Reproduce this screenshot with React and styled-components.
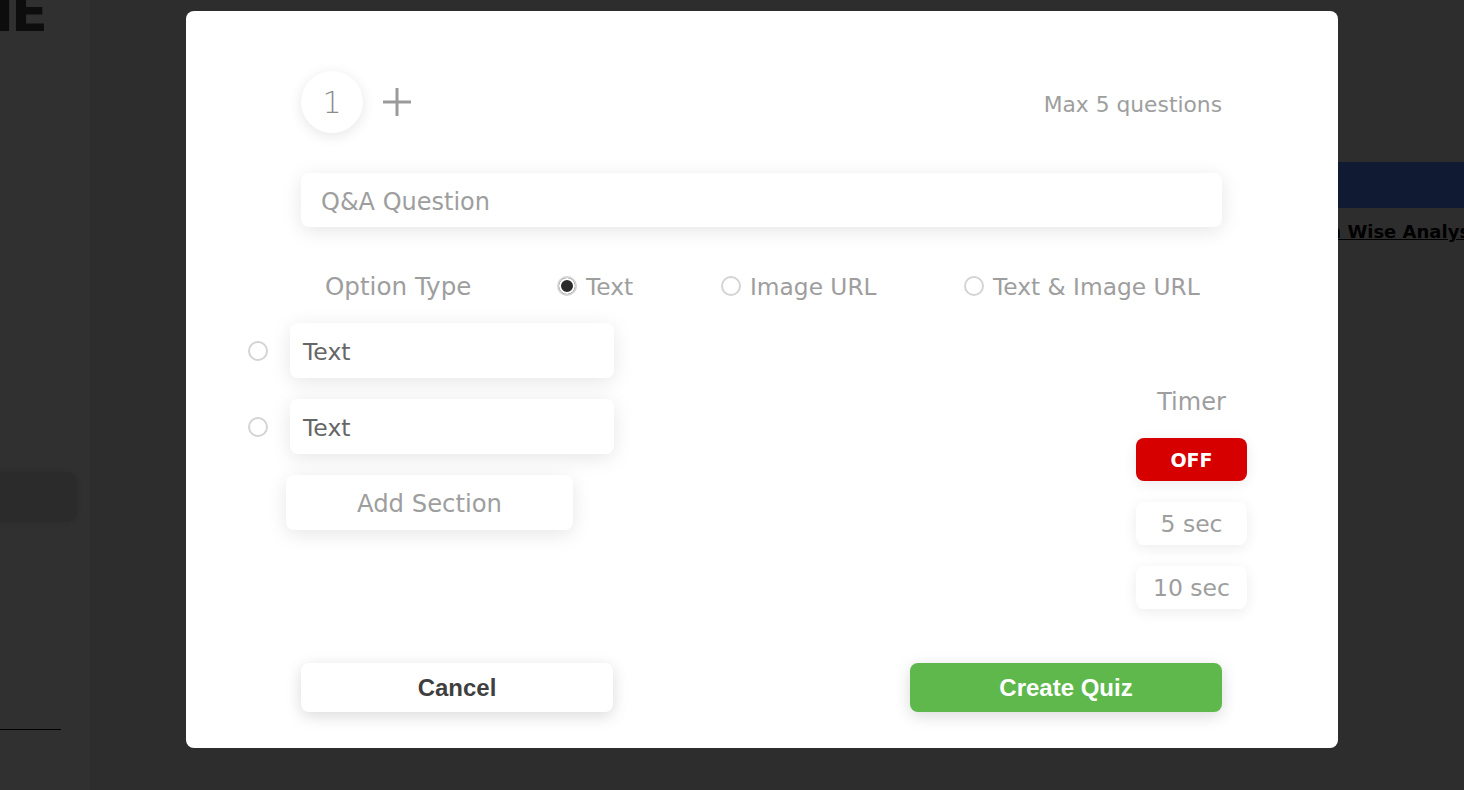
import styled, { createGlobalStyle } from "styled-components";

const GlobalStyle = createGlobalStyle`
  * { box-sizing: border-box; }
  html, body { margin: 0; padding: 0; }
  body {
    width: 1464px;
    height: 790px;
    overflow: hidden;
    font-family: "DejaVu Sans", "Open Sans", sans-serif;
  }
`;

const FONT = `"DejaVu Sans", "Open Sans", sans-serif`;
const GRAY = "#9e9e9e";

function RadioDot({ checked }) {
  return <S.Radio $checked={checked} />;
}

function Plus() {
  return (
    <svg width="30" height="30" viewBox="0 0 30 30">
      <line x1="15" y1="1" x2="15" y2="29" stroke="#9a9a9a" strokeWidth="3" />
      <line x1="1" y1="15" x2="29" y2="15" stroke="#9a9a9a" strokeWidth="3" />
    </svg>
  );
}

function App() {
  const optionTypes = [
    { label: "Text", checked: true },
    { label: "Image URL", checked: false },
    { label: "Text & Image URL", checked: false },
  ];
  const timers = ["5 sec", "10 sec"];

  return (
    <>
      <GlobalStyle />
      <S.Page>
        <S.Sidebar>
          <S.Logo>IE</S.Logo>
          <S.SideBox />
          <S.SideLine />
        </S.Sidebar>
        <S.Main>
          <S.Banner />
          <S.TabRow>
            <S.TabLink>Question Wise Analysis</S.TabLink>
          </S.TabRow>
        </S.Main>
      </S.Page>

      <S.Overlay>
        <S.Modal>
          <S.Header>
            <S.Left>
              <S.NumberBubble>1</S.NumberBubble>
              <S.PlusButton>
                <Plus />
              </S.PlusButton>
            </S.Left>
            <S.MaxNote>Max 5 questions</S.MaxNote>
          </S.Header>

          <S.QuestionInput>Q&amp;A Question</S.QuestionInput>

          <S.TypeRow>
            <S.TypeLabel>Option Type</S.TypeLabel>
            {optionTypes.map((t) => (
              <S.TypeOption key={t.label}>
                <RadioDot checked={t.checked} />
                {t.label}
              </S.TypeOption>
            ))}
          </S.TypeRow>

          <S.Body>
            <S.Options>
              {[0, 1].map((i) => (
                <S.OptionRow key={i}>
                  <RadioDot />
                  <S.OptionInput>Text</S.OptionInput>
                </S.OptionRow>
              ))}
              <S.AddSection>Add Section</S.AddSection>
            </S.Options>

            <S.Timer>
              <S.TimerLabel>Timer</S.TimerLabel>
              <S.TimerButton $active>OFF</S.TimerButton>
              {timers.map((t) => (
                <S.TimerButton key={t}>{t}</S.TimerButton>
              ))}
            </S.Timer>
          </S.Body>

          <S.Footer>
            <S.ActionButton>Cancel</S.ActionButton>
            <S.ActionButton $primary>Create Quiz</S.ActionButton>
          </S.Footer>
        </S.Modal>
      </S.Overlay>
    </>
  );
}
export default App;

const Page = styled.div`
  display: flex;
  width: 1464px;
  height: 790px;
  overflow: hidden;
  background: #dedede;
`;

const Sidebar = styled.div`
  width: 90px;
  flex-shrink: 0;
  background: #f0f0f0;
  display: flex;
  flex-direction: column;
  overflow: hidden;
`;

const Logo = styled.div`
  font-family: "DejaVu Sans", sans-serif;
  font-weight: 900;
  font-size: 54px;
  line-height: 54px;
  margin-top: -14px;
  margin-left: -6px;
  color: #404040;
  letter-spacing: -3px;
`;

const SideBox = styled.div`
  margin-top: 432px;
  margin-left: -20px;
  width: 97px;
  height: 50px;
  border-radius: 10px;
  background: #d4d4d4;
  box-shadow: 0 0 8px rgba(0, 0, 0, 0.12);
`;

const SideLine = styled.div`
  margin-top: 207px;
  width: 61px;
  height: 1px;
  background: #000;
`;

const Main = styled.div`
  flex: 1;
  display: flex;
  flex-direction: column;
  padding-top: 162px;
`;

const Banner = styled.div`
  margin-left: 200px;
  height: 46px;
  background: #5783ff;
`;

const TabRow = styled.div`
  display: flex;
  justify-content: flex-end;
  margin-right: -23px;
  padding-top: 13px;
`;

const TabLink = styled.span`
  font-family: ${FONT};
  font-weight: 700;
  font-size: 18px;
  color: #000;
  text-decoration: underline;
`;

const Overlay = styled.div`
  position: fixed;
  inset: 0;
  background: rgba(0, 0, 0, 0.8);
  display: flex;
  justify-content: center;
  padding: 11px 0 0 60px;
`;

const Modal = styled.div`
  width: 1152px;
  height: 737px;
  background: #fff;
  border-radius: 8px;
  padding: 60px 116px 36px 115px;
  display: flex;
  flex-direction: column;
  font-family: ${FONT};
`;

const Header = styled.div`
  display: flex;
  align-items: center;
  justify-content: space-between;
  height: 62px;
`;

const Left = styled.div`
  display: flex;
  align-items: center;
  gap: 19px;
`;

const NumberBubble = styled.div`
  width: 62px;
  height: 62px;
  border-radius: 50%;
  background: #fff;
  box-shadow: 0 3px 14px rgba(0, 0, 0, 0.1);
  display: flex;
  align-items: center;
  justify-content: center;
  font-size: 30px;
  font-weight: 300;
  color: #8c8c8c;
`;

const PlusButton = styled.div`
  display: flex;
`;

const MaxNote = styled.div`
  font-size: 21.8px;
  color: ${GRAY};
  margin-top: 4px;
`;

const QuestionInput = styled.div`
  margin-top: 40px;
  height: 54px;
  border-radius: 8px;
  background: #fff;
  box-shadow: 0 4px 20px rgba(0, 0, 0, 0.1);
  display: flex;
  align-items: center;
  padding: 3px 0 0 20px;
  font-size: 24px;
  color: ${GRAY};
`;

const TypeRow = styled.div`
  margin-top: 44px;
  height: 30px;
  padding-left: 24px;
  display: grid;
  grid-template-columns: 232px 164px 243px auto;
  align-items: center;
  font-size: 23.3px;
  color: ${GRAY};
`;

const TypeLabel = styled.div`
  font-size: 24.6px;
`;

const TypeOption = styled.div`
  display: flex;
  align-items: center;
  gap: 9px;
`;

const Radio = styled.span`
  width: 20px;
  height: 20px;
  flex-shrink: 0;
  border-radius: 50%;
  border: 2px solid #d4d4d4;
  background: ${(p) => (p.$checked ? "#2b2b2b" : "#fff")};
  box-shadow: ${(p) => (p.$checked ? "inset 0 0 0 2px #fff" : "none")};
`;

const Body = styled.div`
  margin-top: 22px;
  display: flex;
  justify-content: space-between;
  align-items: flex-start;
  margin-left: -55px;
  margin-right: -25px;
`;

const Options = styled.div`
  display: flex;
  flex-direction: column;
  gap: 21px;
`;

const OptionRow = styled.div`
  display: flex;
  align-items: center;
  gap: 22px;
  padding-left: 2px;
`;

const OptionInput = styled.div`
  width: 324px;
  height: 55px;
  border-radius: 8px;
  background: #fff;
  box-shadow: 0 4px 20px rgba(0, 0, 0, 0.1);
  display: flex;
  align-items: center;
  padding: 2px 0 0 13px;
  font-size: 23.5px;
  color: #666;
`;

const AddSection = styled.div`
  margin-left: 40px;
  width: 287px;
  height: 55px;
  border-radius: 8px;
  background: #fff;
  box-shadow: 0 4px 20px rgba(0, 0, 0, 0.1);
  display: flex;
  align-items: center;
  justify-content: center;
  padding-top: 2px;
  font-size: 24.3px;
  color: ${GRAY};
`;

const Timer = styled.div`
  margin-top: 64px;
  width: 111px;
  display: flex;
  flex-direction: column;
  align-items: center;
  gap: 21px;
`;

const TimerLabel = styled.div`
  font-size: 24px;
  color: ${GRAY};
  line-height: 30px;
`;

const TimerButton = styled.div`
  width: 111px;
  height: 43px;
  border-radius: 8px;
  display: flex;
  align-items: center;
  justify-content: center;
  font-size: ${(p) => (p.$active ? "19px" : "23.5px")};
  background: ${(p) => (p.$active ? "#d60000" : "#fff")};
  color: ${(p) => (p.$active ? "#fff" : GRAY)};
  font-weight: ${(p) => (p.$active ? 700 : 400)};
  box-shadow: 0 3px 14px rgba(0, 0, 0, 0.08);
`;

const Footer = styled.div`
  margin-top: auto;
  display: flex;
  justify-content: space-between;
`;

const ActionButton = styled.div`
  width: 312px;
  height: 49px;
  border-radius: 8px;
  display: flex;
  align-items: center;
  justify-content: center;
  font-family: "Liberation Sans", Arial, sans-serif;
  font-weight: 700;
  font-size: 24px;
  background: ${(p) => (p.$primary ? "#5eb84c" : "#fff")};
  color: ${(p) => (p.$primary ? "#fff" : "#3f3f3f")};
  box-shadow: 0 4px 16px rgba(0, 0, 0, 0.15);
`;

const S = {
  Page,
  Sidebar,
  Logo,
  SideBox,
  SideLine,
  Main,
  Banner,
  TabRow,
  TabLink,
  Overlay,
  Modal,
  Header,
  Left,
  NumberBubble,
  PlusButton,
  MaxNote,
  QuestionInput,
  TypeRow,
  TypeLabel,
  TypeOption,
  Radio,
  Body,
  Options,
  OptionRow,
  OptionInput,
  AddSection,
  Timer,
  TimerLabel,
  TimerButton,
  Footer,
  ActionButton,
};
